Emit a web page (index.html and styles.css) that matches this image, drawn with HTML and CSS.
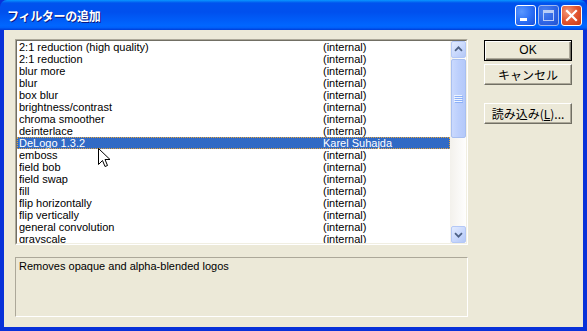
FILE: index.html
```html
<!DOCTYPE html>
<html lang="ja">
<head>
<meta charset="utf-8">
<title>フィルターの追加</title>
<link rel="stylesheet" href="styles.css">
</head>
<body>
<div class="window">
  <div class="titlebar">
    <span class="title">フィルターの追加</span>
    <div class="tbtns">
      <span class="tb"><svg width="21" height="21" viewBox="0 0 21 21"><rect x="5" y="13" width="7" height="3" fill="#fff"/></svg></span>
      <span class="tb disabled"><svg width="21" height="21" viewBox="0 0 21 21"><rect x="5.5" y="5.5" width="10" height="10" fill="none" stroke="#b9cdf7" stroke-width="1"/><rect x="5" y="5" width="11" height="3" fill="#b9cdf7"/></svg></span>
      <span class="tb close"><svg width="21" height="21" viewBox="0 0 21 21"><path d="M6 6 L15 15 M15 6 L6 15" stroke="#fff" stroke-width="2.2" stroke-linecap="square"/></svg></span>
    </div>
  </div>
  <div class="client">
    <div class="leftcol">
      <div class="listbox">
        <div class="rows">
          <div class="row"><span class="c1">2:1 reduction (high quality)</span><span class="c2">(internal)</span></div>
          <div class="row"><span class="c1">2:1 reduction</span><span class="c2">(internal)</span></div>
          <div class="row"><span class="c1">blur more</span><span class="c2">(internal)</span></div>
          <div class="row"><span class="c1">blur</span><span class="c2">(internal)</span></div>
          <div class="row"><span class="c1">box blur</span><span class="c2">(internal)</span></div>
          <div class="row"><span class="c1">brightness/contrast</span><span class="c2">(internal)</span></div>
          <div class="row"><span class="c1">chroma smoother</span><span class="c2">(internal)</span></div>
          <div class="row"><span class="c1">deinterlace</span><span class="c2">(internal)</span></div>
          <div class="row selected"><span class="c1">DeLogo 1.3.2</span><span class="c2">Karel Suhajda</span></div>
          <div class="row"><span class="c1">emboss</span><span class="c2">(internal)</span></div>
          <div class="row"><span class="c1">field bob</span><span class="c2">(internal)</span></div>
          <div class="row"><span class="c1">field swap</span><span class="c2">(internal)</span></div>
          <div class="row"><span class="c1">fill</span><span class="c2">(internal)</span></div>
          <div class="row"><span class="c1">flip horizontally</span><span class="c2">(internal)</span></div>
          <div class="row"><span class="c1">flip vertically</span><span class="c2">(internal)</span></div>
          <div class="row"><span class="c1">general convolution</span><span class="c2">(internal)</span></div>
          <div class="row"><span class="c1">grayscale</span><span class="c2">(internal)</span></div>
        </div>
        <div class="vscroll">
          <div class="sbtn"><svg width="15" height="15" viewBox="0 0 15 15"><path d="M3.5 9 L7.5 5 L11.5 9" fill="none" stroke="#4d6185" stroke-width="2"/></svg></div>
          <div class="track">
            <div class="thumb"><svg width="9" height="8" viewBox="0 0 9 8"><path d="M0 0.5H8M0 2.5H8M0 4.5H8M0 6.5H8" stroke="#eef4fe" stroke-width="1"/><path d="M1 1.5H9M1 3.5H9M1 5.5H9M1 7.5H9" stroke="#8cb0f8" stroke-width="1"/></svg></div>
          </div>
          <div class="sbtn"><svg width="15" height="15" viewBox="0 0 15 15"><path d="M3.5 6 L7.5 10 L11.5 6" fill="none" stroke="#4d6185" stroke-width="2"/></svg></div>
        </div>
      </div>
      <div class="desc">Removes opaque and alpha-blended logos</div>
    </div>
    <div class="buttons">
      <button class="btn default">OK</button>
      <button class="btn">キャンセル</button>
      <button class="btn load">読み込み(<u>L</u>)...</button>
    </div>
  </div>
  <svg class="cursor" width="13" height="20" viewBox="0 0 13 20"><path d="M0.5 0.5 L0.5 16.5 L4.5 12.5 L7 18.5 L9.5 17.5 L7 11.5 L12 11.5 Z" fill="#fff" stroke="#000" stroke-width="1" stroke-linejoin="miter"/></svg>
</div>
</body>
</html>
```

FILE: styles.css
```css
html, body {
  margin: 0;
  padding: 0;
  width: 587px;
  height: 331px;
  overflow: hidden;
  background: #ece9d8;
}

.window {
  position: relative;
  width: 587px;
  height: 331px;
  display: flex;
  flex-direction: column;
  box-sizing: border-box;
  background: #0831d9;
  font-family: "Liberation Sans", Arial, "Noto Sans CJK JP", sans-serif;
  font-size: 11px;
  color: #000;
}

.titlebar {
  height: 30px;
  flex: none;
  display: flex;
  align-items: center;
  justify-content: space-between;
  padding: 0 5px 0 7px;
  border-radius: 7px 7px 0 0;
  background: linear-gradient(to bottom, #0997ff 0%, #0053ee 10%, #0050ee 40%, #0066ff 85%, #0060fa 92%, #003dd7 100%);
}

.title {
  font-family: "Noto Sans CJK JP", "Liberation Sans", sans-serif;
  font-weight: bold;
  font-size: 12px;
  letter-spacing: -0.3px;
  color: #fff;
  text-shadow: 1px 1px 0 #0a1883;
  margin-top: 1px;
}

.tbtns {
  display: flex;
  gap: 2px;
  margin-top: 1px;
}

.tb {
  width: 21px;
  height: 21px;
  box-sizing: border-box;
  border: 1px solid #fff;
  border-radius: 3px;
  background: radial-gradient(circle at 30% 30%, #5a97ff 0%, #2a6ef5 55%, #1a4fd8 100%);
  display: flex;
  align-items: center;
  justify-content: center;
  overflow: hidden;
}

.tb svg {
  flex: none;
}

.tb.disabled {
  border-color: #9eb8ef;
  background: radial-gradient(circle at 30% 30%, #4b82f0 0%, #2d63e4 60%, #2452cf 100%);
}

.tb.close {
  background: radial-gradient(circle at 30% 30%, #f39a7a 0%, #e2552f 50%, #c93a16 100%);
}

.client {
  flex: 1;
  margin: 0 4px 4px 4px;
  background: #ece9d8;
  display: grid;
  grid-template-columns: 453px 88px;
  column-gap: 16px;
  padding: 9px 0 0 11px;
  align-items: start;
}

.leftcol {
  display: flex;
  flex-direction: column;
  gap: 12px;
}

.listbox {
  height: 206px;
  box-sizing: border-box;
  border-style: solid;
  border-width: 1px;
  border-color: #aca899 #fff #fff #aca899;
  display: flex;
  background: #fff;
}

.listbox > .rows,
.listbox > .vscroll {
  border-top: 1px solid #716f64;
  border-bottom: 1px solid #f1efe2;
}

.rows {
  flex: 1;
  overflow: hidden;
  border-left: 1px solid #716f64;
  background: #fff;
}

.row {
  height: 12px;
  line-height: 12px;
  display: grid;
  grid-template-columns: 304px 1fr;
  padding-left: 2px;
  box-sizing: border-box;
  white-space: nowrap;
}

.row .c1, .row .c2 {
  overflow: hidden;
}

.row.selected {
  background: #316ac5;
  color: #fff;
  outline: 1px dotted #e3a43c;
  outline-offset: -1px;
}

.vscroll {
  width: 17px;
  flex: none;
  display: flex;
  flex-direction: column;
  background: linear-gradient(to right, #f3f1ec, #fefefe);
  border-right: 1px solid #f1efe2;
  box-sizing: border-box;
}

.sbtn {
  height: 17px;
  flex: none;
  box-sizing: border-box;
  margin: 0 0 0 1px;
  border: 1px solid #b4c8f6;
  border-radius: 2px;
  background: linear-gradient(135deg, #e2ebfe 0%, #c6d6fc 60%, #b4c8f6 100%);
  display: flex;
  align-items: center;
  justify-content: center;
}

.track {
  flex: 1;
  padding: 1px 0 1px 1px;
  display: flex;
  flex-direction: column;
}

.thumb {
  height: 79px;
  box-sizing: border-box;
  border: 1px solid #a8bff0;
  border-radius: 2px;
  background: linear-gradient(to right, #cad9fd 0%, #bccffc 50%, #b4c9fa 100%);
  display: flex;
  align-items: center;
  justify-content: center;
}

.desc {
  height: 60px;
  box-sizing: border-box;
  border-style: solid;
  border-width: 1px;
  border-color: #aca899 #fff #fff #aca899;
  padding: 2px 3px;
  line-height: 13px;
}

.buttons {
  display: flex;
  flex-direction: column;
  gap: 3px;
  padding-top: 1px;
}

.btn {
  width: 88px;
  height: 21px;
  box-sizing: border-box;
  margin: 0;
  padding: 0;
  font-family: "Noto Sans CJK JP", "Liberation Sans", sans-serif;
  font-size: 12px;
  line-height: 17px;
  color: #000;
  background: #ece9d8;
  border-style: solid;
  border-width: 1px;
  border-color: #fff #716f64 #716f64 #fff;
  box-shadow: inset -1px -1px 0 #aca899;
}

.btn.default {
  border: 1px solid #000;
  box-shadow: inset 1px 1px 0 #fff, inset -1px -1px 0 #716f64, inset -2px -2px 0 #aca899;
  font-family: "Liberation Sans", sans-serif;
}

.btn.load {
  margin-top: 15px;
}

.btn u {
  text-decoration: underline;
}

.cursor {
  position: absolute;
  left: 98px;
  top: 148px;
}
```
